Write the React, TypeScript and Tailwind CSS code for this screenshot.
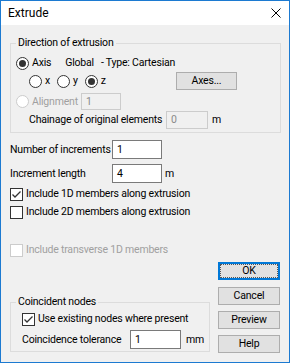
import React from "react";

const FONT = "font-['Roboto','Noto_Sans',sans-serif] text-[10.5px] leading-[16px] tracking-[-0.2px] whitespace-nowrap";

function Radio({ checked = false, disabled = false }: { checked?: boolean; disabled?: boolean }) {
  return (
    <span
      className={
        "flex items-center justify-center w-[13px] h-[13px] rounded-full border bg-white shrink-0 " +
        (disabled ? "border-[#cccccc]" : "border-[#333333]")
      }
    >
      {checked && <span className="w-[7px] h-[7px] rounded-full bg-[#333333]" />}
    </span>
  );
}

function Check({ checked = false, disabled = false }: { checked?: boolean; disabled?: boolean }) {
  return (
    <span
      className={
        "flex items-center justify-center w-[13px] h-[13px] border bg-white shrink-0 " +
        (disabled ? "border-[#cccccc]" : "border-[#333333]")
      }
    >
      {checked && (
        <svg width="11" height="11" viewBox="0 0 11 11">
          <polyline points="1.5,5.5 4,8 9.5,2.5" fill="none" stroke="#333" strokeWidth="1.3" />
        </svg>
      )}
    </span>
  );
}

function Input({ value, w, h, disabled = false }: { value: string; w: string; h: string; disabled?: boolean }) {
  return (
    <div
      className={
        "flex items-center pl-[4px] border shrink-0 " +
        w + " " + h + " " +
        (disabled ? "border-[#cccccc] bg-[#f0f0f0] text-[#8a8a8a]" : "border-[#7a7a7a] bg-white text-black")
      }
    >
      {value}
    </div>
  );
}

function Button({ label, primary = false, mt }: { label: string; primary?: boolean; mt: string }) {
  return (
    <button
      className={
        "flex items-center justify-center w-[62px] h-[18px] bg-[#e1e1e1] text-black " + mt + " " +
        (primary ? "border-2 border-[#0078d7]" : "border border-[#adadad]")
      }
    >
      {primary ? (
        <span className="flex items-center justify-center w-full h-full border border-dotted border-[#555]">{label}</span>
      ) : (
        label
      )}
    </button>
  );
}

export default function App() {
  return (
    <div className={"w-[290px] h-[363px] flex flex-col border border-[#1c7ad1] bg-[#f0f0f0] text-black " + FONT}>
      {/* Title bar */}
      <div className="flex items-center h-[24px] bg-white pl-[7px] pr-[8px] shrink-0">
        <span className="text-[12px] tracking-normal flex-1">Extrude</span>
        <svg width="10" height="10" viewBox="0 0 10 10">
          <path d="M0.5 0.5 L9.5 9.5 M9.5 0.5 L0.5 9.5" stroke="#000" strokeWidth="1" />
        </svg>
      </div>

      <div className="flex flex-col pl-[9px] pr-[8px]">
        {/* Direction of extrusion */}
        <div className="relative mt-[18px] h-[90px] border border-[#dcdcdc] flex flex-col">
          <span className="absolute -top-[9px] left-[5px] px-[2px] bg-[#f0f0f0]">Direction of extrusion</span>

          <div className="flex items-center h-[16px] mt-[11px] pl-[5px]">
            <Radio checked />
            <span className="ml-[3px]">Axis</span>
            <span className="ml-[14px]">Global</span>
            <span className="ml-[7px]">- Type: Cartesian</span>
          </div>

          <div className="flex items-center h-[18px] mt-[1px] pl-[18px]">
            <Radio />
            <span className="ml-[3px]">x</span>
            <span className="ml-[7px]"><Radio /></span>
            <span className="ml-[3px]">y</span>
            <span className="ml-[7px]"><Radio checked /></span>
            <span className="ml-[3px]">z</span>
            <button className="ml-auto mr-[43px] w-[61px] h-[18px] bg-[#e1e1e1] border border-[#adadad] flex items-center justify-center">
              Axes...
            </button>
          </div>

          <div className="flex items-center h-[17px] mt-[3px] pl-[5px] text-[#a0a0a0]">
            <Radio disabled />
            <span className="ml-[3px]">Alignment</span>
            <span className="ml-[3px]">
              <Input value="1" w="w-[40px]" h="h-[17px]" disabled />
            </span>
          </div>

          <div className="flex items-center h-[18px] mt-[1px] pl-[18px]">
            <span>Chainage of original elements</span>
            <span className="ml-auto">
              <Input value="0" w="w-[42px]" h="h-[18px]" disabled />
            </span>
            <span className="ml-[4px] mr-[59px]">m</span>
          </div>
        </div>

        {/* Increments */}
        <div className="flex items-center h-[19px] mt-[7px]">
          <span className="w-[102px] shrink-0">Number of increments</span>
          <Input value="1" w="w-[50px]" h="h-[19px]" />
        </div>
        <div className="flex items-center h-[19px] mt-[5px]">
          <span className="w-[102px] shrink-0">Increment length</span>
          <Input value="4" w="w-[50px]" h="h-[19px]" />
          <span className="ml-[3px]">m</span>
        </div>

        <div className="flex items-center h-[16px] mt-[3px]">
          <Check checked />
          <span className="ml-[3px]">Include 1D members along extrusion</span>
        </div>
        <div className="flex items-center h-[16px] mt-[2px]">
          <Check />
          <span className="ml-[3px]">Include 2D members along extrusion</span>
        </div>
        <div className="flex items-center h-[16px] mt-[22px] text-[#a0a0a0]">
          <Check disabled />
          <span className="ml-[3px]">Include transverse 1D members</span>
        </div>

        {/* Bottom: coincident nodes + buttons */}
        <div className="flex items-start">
          <div className="relative mt-[44px] w-[200px] h-[50px] border border-[#dcdcdc] flex flex-col shrink-0">
            <span className="absolute -top-[9px] left-[5px] px-[2px] bg-[#f0f0f0]">Coincident nodes</span>
            <div className="flex items-center h-[16px] mt-[8px] pl-[11px]">
              <Check checked />
              <span className="ml-[3px]">Use existing nodes where present</span>
            </div>
            <div className="flex items-center h-[19px] mt-[3px] pl-[11px]">
              <span className="w-[108px] shrink-0">Coincidence tolerance</span>
              <Input value="1" w="w-[51px]" h="h-[19px]" />
              <span className="ml-[5px]">mm</span>
            </div>
          </div>

          <div className="flex flex-col ml-[8px]">
            <Button label="OK" primary mt="mt-[4px]" />
            <Button label="Cancel" mt="mt-[7px]" />
            <Button label="Preview" mt="mt-[6px]" />
            <Button label="Help" mt="mt-[6px]" />
          </div>
        </div>
      </div>
    </div>
  );
}
